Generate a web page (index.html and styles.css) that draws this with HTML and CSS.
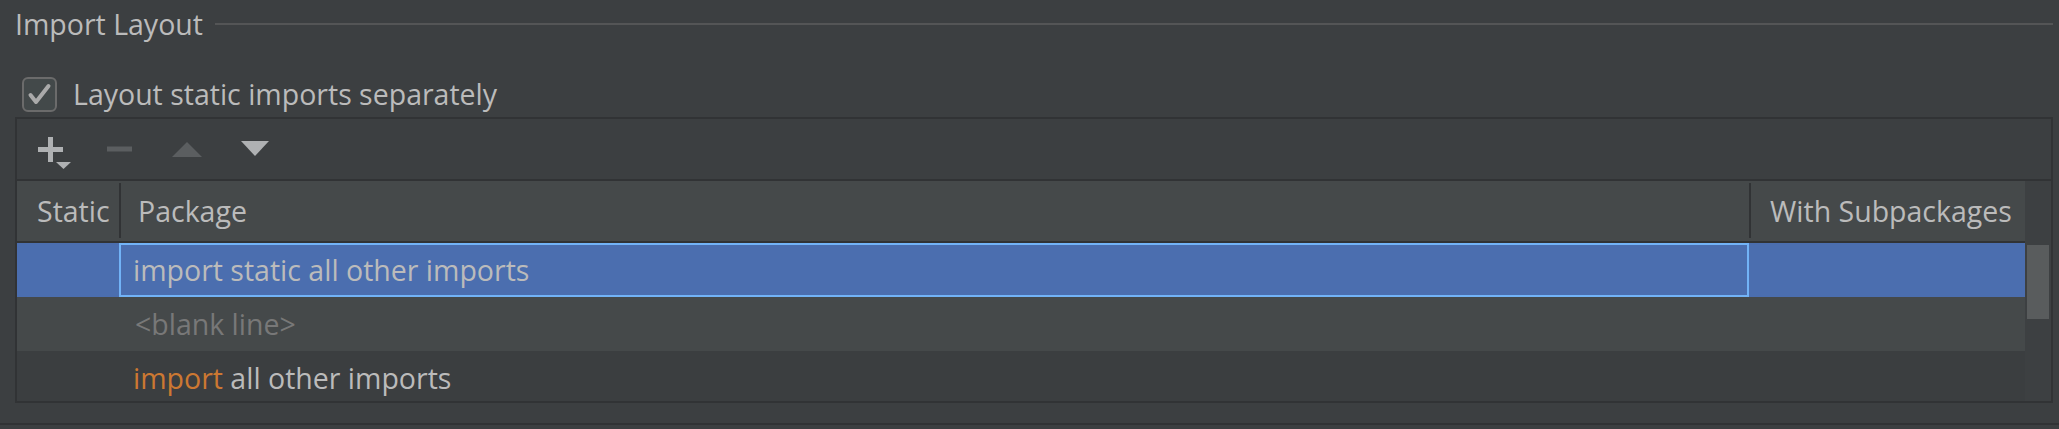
FILE: index.html
```html
<!DOCTYPE html>
<html>
<head>
<meta charset="utf-8">
<title>Import Layout</title>
<link rel="stylesheet" href="styles.css">
</head>
<body>
<div class="page">
  <div class="group-title">
    <span class="title-text">Import Layout</span>
    <span class="title-rule"></span>
  </div>

  <div class="check-row">
    <span class="checkbox">
      <svg width="35" height="35" viewBox="0 0 35 35">
        <rect x="1" y="1" width="33" height="33" rx="5" ry="5" fill="#43494a" stroke="#6b6b6b" stroke-width="2"/>
        <polyline points="8.5,18 14,25 26.5,9" fill="none" stroke="#aaaaaa" stroke-width="4" stroke-linecap="round" stroke-linejoin="round"/>
      </svg>
    </span>
    <span class="check-label">Layout static imports separately</span>
  </div>

  <div class="panel">
    <div class="toolbar">
      <span class="tool">
        <svg width="68" height="60" viewBox="0 0 68 60">
          <rect x="21" y="28" width="25" height="5" fill="#afb1b3"/>
          <rect x="31" y="18" width="5" height="25" fill="#afb1b3"/>
          <polygon points="39,43 54,43 46.5,50" fill="#afb1b3"/>
        </svg>
      </span>
      <span class="tool">
        <svg width="68" height="60" viewBox="0 0 68 60">
          <rect x="22" y="27.5" width="25" height="5" fill="#5b5e60"/>
        </svg>
      </span>
      <span class="tool">
        <svg width="68" height="60" viewBox="0 0 68 60">
          <polygon points="19,38 49,38 34,23" fill="#5b5e60"/>
        </svg>
      </span>
      <span class="tool">
        <svg width="68" height="60" viewBox="0 0 68 60">
          <polygon points="20,22 48,22 34,37" fill="#afb1b3"/>
        </svg>
      </span>
    </div>

    <div class="viewport">
      <div class="table">
        <div class="row header">
          <div class="cell c-static">Static</div>
          <div class="cell c-pkg divided">Package</div>
          <div class="cell c-sub divided">With Subpackages</div>
        </div>
        <div class="row selected">
          <div class="cell c-static"></div>
          <div class="cell c-pkg focused">import static all other imports</div>
          <div class="cell c-sub"></div>
        </div>
        <div class="row light">
          <div class="cell c-static"></div>
          <div class="cell c-pkg muted">&lt;blank line&gt;</div>
          <div class="cell c-sub"></div>
        </div>
        <div class="row dark">
          <div class="cell c-static"></div>
          <div class="cell c-pkg"><span class="kw">import</span> all other imports</div>
          <div class="cell c-sub"></div>
        </div>
      </div>
      <div class="scrollbar">
        <div class="thumb"></div>
      </div>
    </div>
  </div>

  <div class="bottom-rule"></div>
</div>
</body>
</html>
```
FILE: styles.css
```css
html, body {
  margin: 0;
  padding: 0;
  background: #3c3f41;
}

body {
  width: 2059px;
  height: 429px;
  overflow: hidden;
  font-family: "Open Sans", "Noto Sans", sans-serif;
  font-size: 28.5px;
  color: #bbbbbb;
}

.page {
  display: flex;
  flex-direction: column;
  padding-top: 5px;
}

/* titled separator */
.group-title {
  display: flex;
  align-items: center;
  height: 38px;
  line-height: 38px;
  margin-left: 15px;
  margin-right: 6px;
}

.title-text {
  white-space: nowrap;
}

.title-rule {
  flex: 1;
  height: 2px;
  margin-left: 12px;
  background: #545556;
}

/* checkbox */
.check-row {
  display: flex;
  align-items: center;
  height: 38px;
  line-height: 38px;
  margin-top: 32px;
  margin-left: 22px;
}

.checkbox {
  display: flex;
  width: 35px;
  height: 35px;
}

.check-label {
  margin-left: 16px;
  white-space: nowrap;
}

/* table panel */
.panel {
  margin-top: 4px;
  margin-left: 15px;
  width: 2038px;
  height: 286px;
  box-sizing: border-box;
  border: 2px solid #313335;
  display: flex;
  flex-direction: column;
}

.toolbar {
  display: flex;
  height: 60px;
  border-bottom: 2px solid #313335;
  flex: none;
}

.tool {
  display: flex;
  width: 68px;
  height: 60px;
}

.viewport {
  display: flex;
  height: 220px;
  overflow: hidden;
}

.table {
  width: 2008px;
  flex: none;
  display: flex;
  flex-direction: column;
}

.row {
  display: grid;
  grid-template-columns: 102px 1630px 276px;
  height: 54px;
  line-height: 54px;
  flex: none;
}

.cell {
  box-sizing: border-box;
  white-space: nowrap;
  overflow: hidden;
}

.c-static { padding-left: 20px; }
.c-pkg { padding-left: 14px; }
.c-sub { padding-left: 21px; }

.header {
  height: 62px;
  line-height: 60px;
  background: #45494a;
  border-bottom: 2px solid #313335;
  box-sizing: border-box;
}

.header .c-pkg { padding-left: 19px; }

.divided {
  background: linear-gradient(#313335, #313335) left 0 top 2px / 2px 55px no-repeat;
}

.selected {
  background: #4b6eaf;
}

.focused {
  border: 2px solid #72b3f7;
  line-height: 50px;
  padding-left: 12px;
}

.light {
  background: #45494a;
}

.dark {
  background: #3b3e40;
}

.muted {
  color: #787878;
  padding-left: 16px;
}

.kw {
  color: #cc7832;
}

/* scrollbar */
.scrollbar {
  width: 26px;
  flex: none;
  background: #3d4042;
}

.thumb {
  margin-top: 64px;
  margin-left: 2px;
  width: 22px;
  height: 74px;
  background: #595c5d;
}

.bottom-rule {
  margin-top: 20px;
  height: 2px;
  background: #313335;
}
```
